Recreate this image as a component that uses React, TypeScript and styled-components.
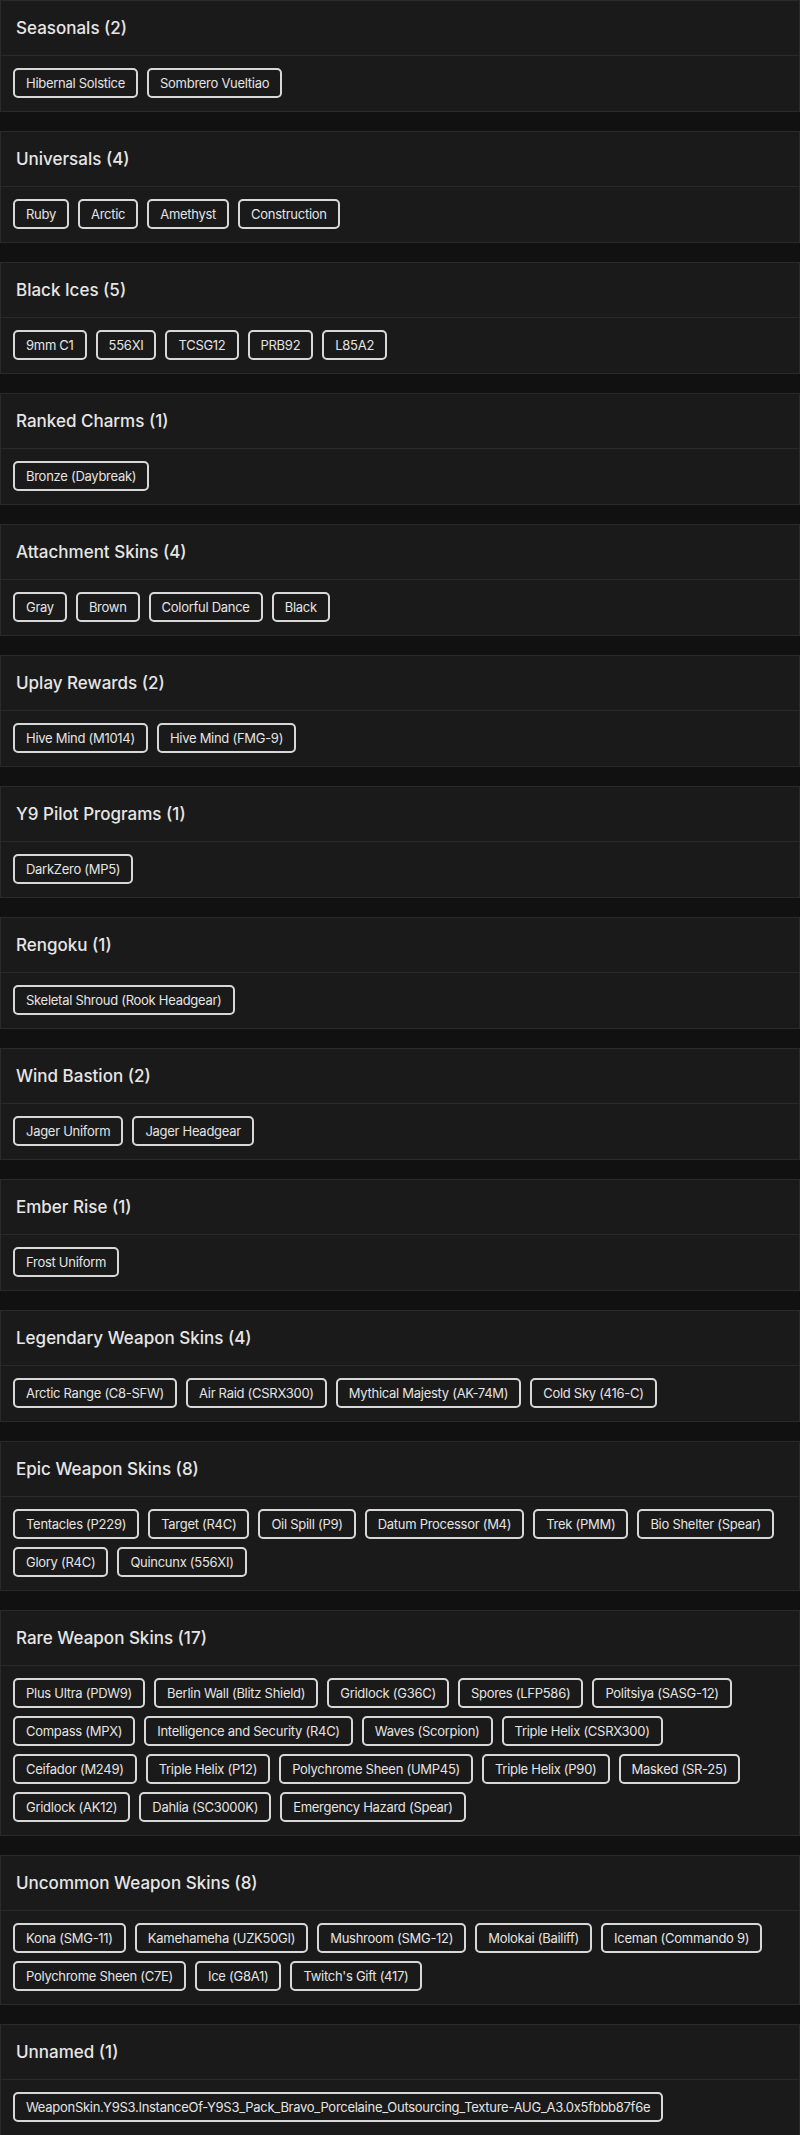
import React from "react";
import styled, { createGlobalStyle } from "styled-components";

const GlobalStyle = createGlobalStyle`
  html, body {
    margin: 0;
    padding: 0;
    background: #111111;
  }
  body {
    font-family: Inter, "Noto Sans", sans-serif;
    color: #e4e4e4;
  }
`;

const Page = styled.div`
  display: flex;
  flex-direction: column;
  gap: 19px;
  background: #111111;
  min-height: 2135px;
`;

const Card = styled.section`
  background: #1a1a1a;
  border: 1px solid #2a2a2a;
`;

const Header = styled.div`
  height: 54px;
  display: flex;
  align-items: center;
  padding: 0 15px;
  border-bottom: 1px solid #2a2a2a;
`;

const Title = styled.h2`
  margin: 0;
  font-size: 17px;
  font-weight: 500;
  color: #e6e6e6;
`;

const Body = styled.div`
  display: flex;
  flex-wrap: wrap;
  gap: 8px 9px;
  padding: 12px 12px 13px;
`;

const Chip = styled.span`
  box-sizing: border-box;
  height: 30px;
  display: inline-flex;
  align-items: center;
  padding: 0 11px;
  border: 2px solid #d8d8d8;
  border-radius: 5px;
  font-size: 13px;
  letter-spacing: -0.28px;
  font-weight: 400;
  color: #e4e4e4;
  white-space: nowrap;
`;

const groups: { title: string; items: string[] }[] = [
  { title: "Seasonals", items: ["Hibernal Solstice", "Sombrero Vueltiao"] },
  { title: "Universals", items: ["Ruby", "Arctic", "Amethyst", "Construction"] },
  { title: "Black Ices", items: ["9mm C1", "556XI", "TCSG12", "PRB92", "L85A2"] },
  { title: "Ranked Charms", items: ["Bronze (Daybreak)"] },
  { title: "Attachment Skins", items: ["Gray", "Brown", "Colorful Dance", "Black"] },
  { title: "Uplay Rewards", items: ["Hive Mind (M1014)", "Hive Mind (FMG-9)"] },
  { title: "Y9 Pilot Programs", items: ["DarkZero (MP5)"] },
  { title: "Rengoku", items: ["Skeletal Shroud (Rook Headgear)"] },
  { title: "Wind Bastion", items: ["Jager Uniform", "Jager Headgear"] },
  { title: "Ember Rise", items: ["Frost Uniform"] },
  {
    title: "Legendary Weapon Skins",
    items: ["Arctic Range (C8-SFW)", "Air Raid (CSRX300)", "Mythical Majesty (AK-74M)", "Cold Sky (416-C)"],
  },
  {
    title: "Epic Weapon Skins",
    items: [
      "Tentacles (P229)",
      "Target (R4C)",
      "Oil Spill (P9)",
      "Datum Processor (M4)",
      "Trek (PMM)",
      "Bio Shelter (Spear)",
      "Glory (R4C)",
      "Quincunx (556XI)",
    ],
  },
  {
    title: "Rare Weapon Skins",
    items: [
      "Plus Ultra (PDW9)",
      "Berlin Wall (Blitz Shield)",
      "Gridlock (G36C)",
      "Spores (LFP586)",
      "Politsiya (SASG-12)",
      "Compass (MPX)",
      "Intelligence and Security (R4C)",
      "Waves (Scorpion)",
      "Triple Helix (CSRX300)",
      "Ceifador (M249)",
      "Triple Helix (P12)",
      "Polychrome Sheen (UMP45)",
      "Triple Helix (P90)",
      "Masked (SR-25)",
      "Gridlock (AK12)",
      "Dahlia (SC3000K)",
      "Emergency Hazard (Spear)",
    ],
  },
  {
    title: "Uncommon Weapon Skins",
    items: [
      "Kona (SMG-11)",
      "Kamehameha (UZK50GI)",
      "Mushroom (SMG-12)",
      "Molokai (Bailiff)",
      "Iceman (Commando 9)",
      "Polychrome Sheen (C7E)",
      "Ice (G8A1)",
      "Twitch's Gift (417)",
    ],
  },
  {
    title: "Unnamed",
    items: ["WeaponSkin.Y9S3.InstanceOf-Y9S3_Pack_Bravo_Porcelaine_Outsourcing_Texture-AUG_A3.0x5fbbb87f6e"],
  },
];

export default function App() {
  return (
    <>
      <GlobalStyle />
      <Page>
        {groups.map((g) => (
          <Card key={g.title}>
            <Header>
              <Title>
                {g.title} ({g.items.length})
              </Title>
            </Header>
            <Body>
              {g.items.map((it) => (
                <Chip key={it}>{it}</Chip>
              ))}
            </Body>
          </Card>
        ))}
      </Page>
    </>
  );
}
